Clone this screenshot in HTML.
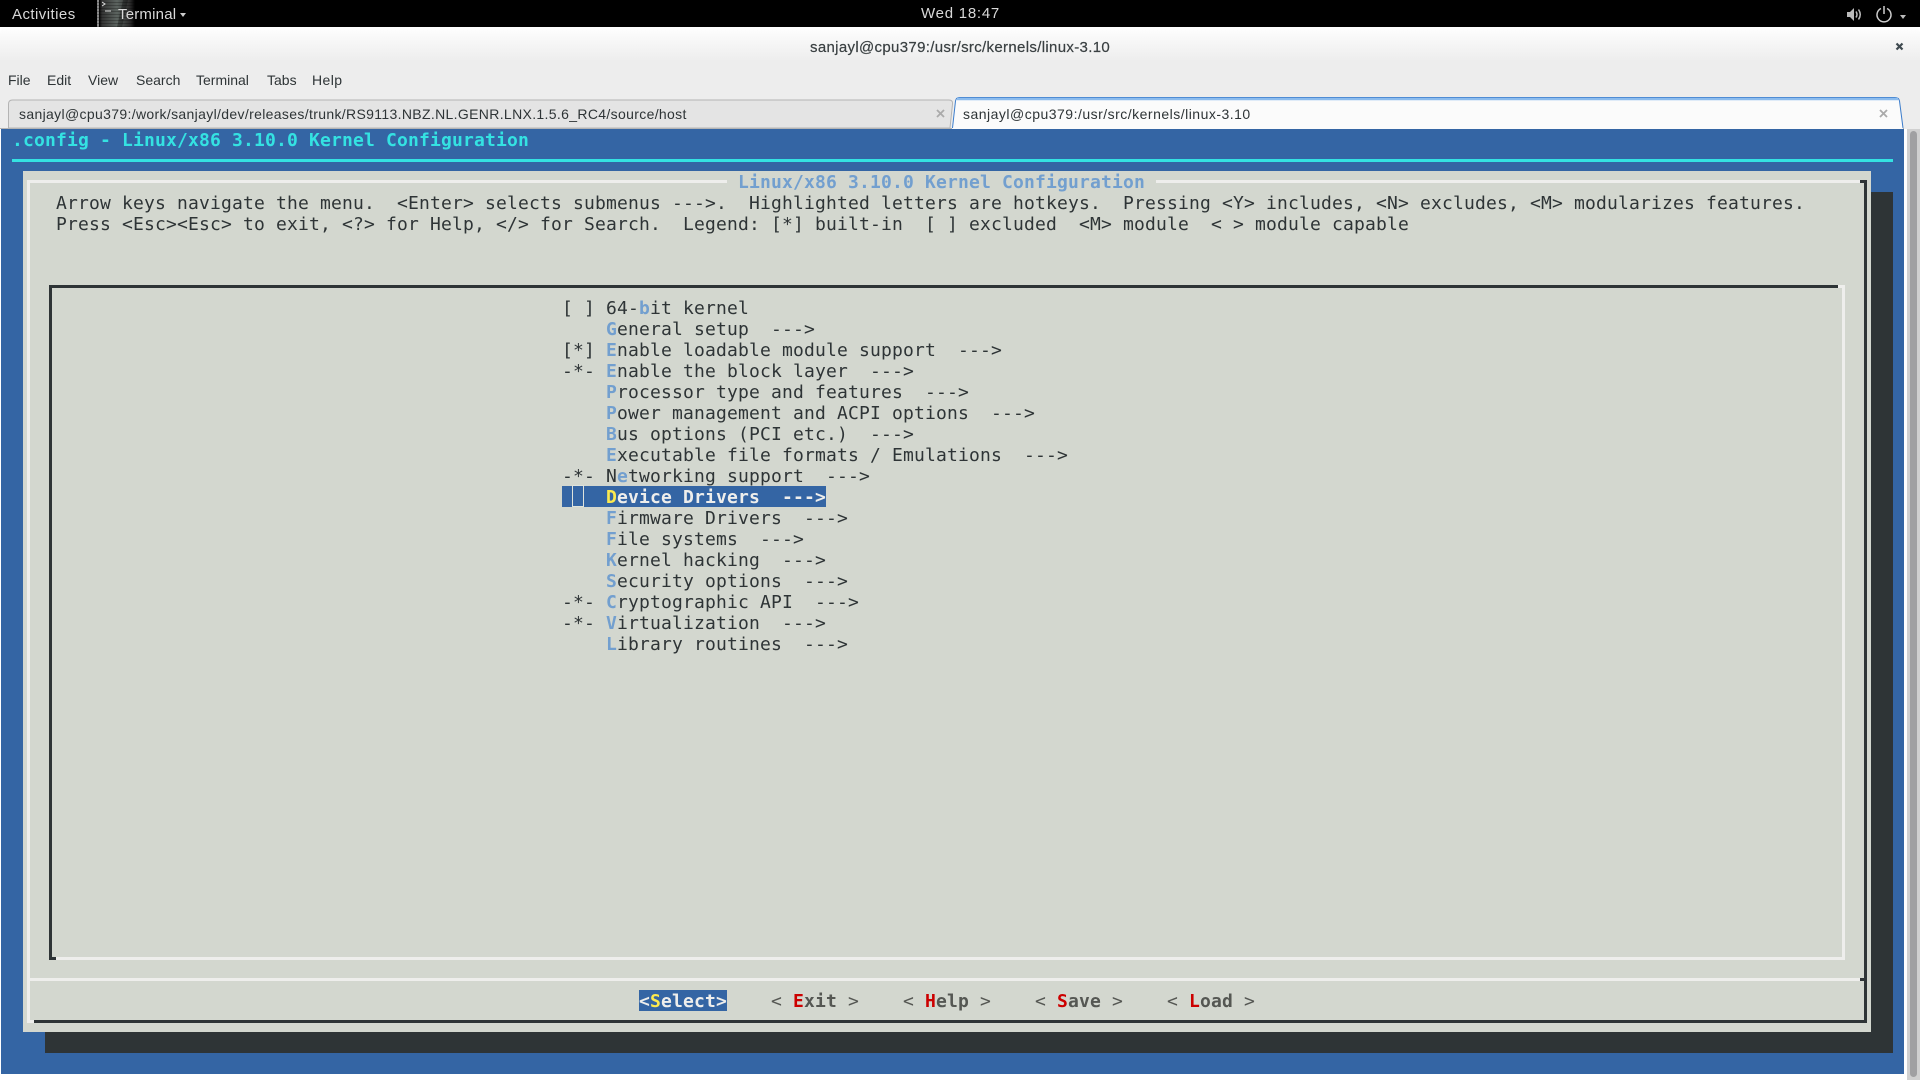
<!DOCTYPE html>
<html lang="en"><head><meta charset="utf-8"><title>Terminal</title>
<style>
html,body{margin:0;padding:0;background:#fff}
body{width:1920px;height:1080px;overflow:hidden;position:relative;font-family:"Liberation Sans",sans-serif}
.a{position:absolute}
.t{position:absolute;white-space:pre;font:18px/21px "DejaVu Sans Mono",monospace;letter-spacing:.163px;color:#2e3436;margin-top:1px}
.h{color:#729fcf;font-weight:bold}
.u{position:absolute;white-space:pre;font-size:14px;line-height:18px;color:#2e3436}
.b{color:#555753;font-weight:bold}
.b i{font-style:normal;font-weight:normal}
.b em{font-style:normal;color:#cc0000}
.l{background:#eeeeec}.d{background:#2e3436}
</style></head><body>
<!-- top bar -->
<div class="a" style="left:0;top:0;width:1920px;height:27px;background:#000"></div>
<div class="u" style="left:12px;top:6px;color:#d8d8d8;font-size:15px;letter-spacing:.45px">Activities</div>
<div class="a" style="left:97px;top:0;width:38px;height:27px;background:repeating-linear-gradient(0deg,rgba(0,0,0,.25) 0 1px,transparent 1px 3px),linear-gradient(90deg,#8a8a8a 0,#8a8a8a 2px,#000 2px,#333 5px,#5c6460 20px,#2a2a2a 33px,#000 38px)"></div>
<svg class="a" style="left:97px;top:0" width="38" height="27" fill="none"><path d="M5 2l3 2-3 2" stroke="#ddd"/><path d="M8 11h6" stroke="#ddd"/><path d="M20 27L26 0h5L25 27z" fill="#000" fill-opacity=".3"/></svg>
<div class="u" style="left:118px;top:6px;color:#d8d8d8;font-size:15px;letter-spacing:.2px">Terminal</div>
<div class="a" style="left:180px;top:13px;border:3.5px solid transparent;border-top:4px solid #ccc;border-bottom:0"></div>
<div class="u" style="left:921px;top:5px;color:#d8d8d8;font-size:15px;letter-spacing:.75px">Wed 18:47</div>
<svg class="a" style="left:1845px;top:5px" width="60" height="20" viewBox="0 0 60 20" fill="none">
<path d="M2 7h3l4-4v13l-4-4H2z" fill="#bbb"/><path d="M11 6.500q2 3 0 6M13.500 4.500q3.500 5 0 10" stroke="#bbb" stroke-width="1.500"/>
<path d="M36 3.500a7 7 0 1 0 6 0M39 1v8" stroke="#ccc" stroke-width="1.500"/>
</svg>
<div class="a" style="left:1900px;top:15px;border:3px solid transparent;border-top:4px solid #bbb;border-bottom:0"></div>
<!-- window header -->
<div class="a" style="left:0;top:27px;width:1920px;height:102px;border-radius:6px 6px 0 0;background:linear-gradient(#fff 0,#fafafa 8px,#ededed 34px,#ededed 102px)"></div>
<div class="u" style="left:810px;top:39px;font-size:15px;color:#3a4042;-webkit-text-stroke:.2px #3a4042;letter-spacing:.33px">sanjayl@cpu379:/usr/src/kernels/linux-3.10</div>
<svg class="a" style="left:1895px;top:42px" width="9" height="9"><path d="M1.500 1.500l6 6M7.500 1.500l-6 6" stroke="#3f4a50" stroke-width="2.200"/></svg>
<div class="u" style="left:8px;top:71px">File</div>
<div class="u" style="left:47px;top:71px">Edit</div>
<div class="u" style="left:88px;top:71px">View</div>
<div class="u" style="left:136px;top:71px">Search</div>
<div class="u" style="left:196px;top:71px">Terminal</div>
<div class="u" style="left:267px;top:71px">Tabs</div>
<div class="u" style="left:312px;top:71px;letter-spacing:.4px">Help</div>
<!-- tabs -->
<svg class="a" style="left:0;top:90px" width="1920" height="40">
<path d="M8.500 38V14q0-4 4-4H949q4 0 3.500 4L950 38z" fill="#e4e4e4" stroke="#b4b4b4"/>
<path d="M0 38.500H954M1900 38.500H1904" stroke="#b4b4b4"/>
<path d="M952 39L955 11q.5-4 4-4H1895q4 0 4.500 4L1903 39z" fill="#fbfbfb"/>
<path d="M952.500 38L955.500 11q.5-3.500 4-3.500H1895q4 0 4.500 3.500L1903 38" fill="none" stroke="#3b7ccb"/>
<path d="M957 9H1898" stroke="#8cbcee" stroke-width="2.500"/>
</svg>
<div class="u" style="left:19px;top:105px;letter-spacing:.34px">sanjayl@cpu379:/work/sanjayl/dev/releases/trunk/RS9113.NBZ.NL.GENR.LNX.1.5.6_RC4/source/host</div>
<div class="u" style="left:963px;top:105px;letter-spacing:.49px">sanjayl@cpu379:/usr/src/kernels/linux-3.10</div>
<svg class="a" style="left:936px;top:109px" width="9" height="9"><path d="M1 1l7 7M8 1L1 8" stroke="#aaa" stroke-width="1.800"/></svg>
<svg class="a" style="left:1879px;top:109px" width="9" height="9"><path d="M1 1l7 7M8 1L1 8" stroke="#aaa" stroke-width="1.800"/></svg>
<!-- terminal -->
<div class="a" style="left:1px;top:129px;width:1903px;height:945px;background:#3465a4"></div>
<div class="a" style="left:1907px;top:129px;width:13px;height:951px;background:#d0d0d0"></div>
<div class="a" style="left:1910px;top:131px;width:7px;height:946px;background:#a0a0a2;border-radius:4px"></div>
<div class="t" style="left:12px;top:129px;color:#34e2e2;font-weight:bold">.config - Linux/x86 3.10.0 Kernel Configuration</div>
<div class="a" style="left:12px;top:159px;width:1881px;height:3px;background:#34e2e2"></div>
<div class="a d" style="left:45px;top:192px;width:1848px;height:861px"></div>
<div class="a" style="left:23px;top:171px;width:1848px;height:861px;background:#d3d7cf"></div>
<!-- dialog frame -->
<div class="a l" style="left:27px;top:180px;width:3px;height:843px"></div>
<div class="a l" style="left:27px;top:180px;width:1833px;height:3px"></div>
<div class="a d" style="left:1860px;top:180px;width:7px;height:3px"></div>
<div class="a d" style="left:1864px;top:180px;width:3px;height:843px"></div>
<div class="a l" style="left:27px;top:1020px;width:7px;height:3px"></div>
<div class="a d" style="left:34px;top:1020px;width:1833px;height:3px"></div>
<div class="a l" style="left:30px;top:978px;width:1830px;height:3px"></div>
<div class="a d" style="left:1860px;top:978px;width:4px;height:3px"></div>
<div class="t" style="left:727px;top:171px;background:#d3d7cf;color:#729fcf;font-weight:bold"> Linux/x86 3.10.0 Kernel Configuration </div>
<div class="t" style="left:56px;top:192px">Arrow keys navigate the menu.  &lt;Enter&gt; selects submenus ---&gt;.  Highlighted letters are hotkeys.  Pressing &lt;Y&gt; includes, &lt;N&gt; excludes, &lt;M&gt; modularizes features.</div>
<div class="t" style="left:56px;top:213px">Press &lt;Esc&gt;&lt;Esc&gt; to exit, &lt;?&gt; for Help, &lt;/&gt; for Search.  Legend: [*] built-in  [ ] excluded  &lt;M&gt; module  &lt; &gt; module capable</div>
<!-- menu frame -->
<div class="a d" style="left:49px;top:285px;width:1789px;height:3px"></div>
<div class="a d" style="left:49px;top:285px;width:3px;height:675px"></div>
<div class="a d" style="left:49px;top:957px;width:7px;height:3px"></div>
<div class="a l" style="left:1838px;top:285px;width:7px;height:3px"></div>
<div class="a l" style="left:1842px;top:285px;width:3px;height:675px"></div>
<div class="a l" style="left:56px;top:957px;width:1789px;height:3px"></div>
<!-- menu -->
<div class="t" style="left:562px;top:297px">[ ] 64-<span class="h">b</span>it kernel</div>
<div class="t" style="left:562px;top:318px">    <span class="h">G</span>eneral setup  ---&gt;</div>
<div class="t" style="left:562px;top:339px">[*] <span class="h">E</span>nable loadable module support  ---&gt;</div>
<div class="t" style="left:562px;top:360px">-*- <span class="h">E</span>nable the block layer  ---&gt;</div>
<div class="t" style="left:562px;top:381px">    <span class="h">P</span>rocessor type and features  ---&gt;</div>
<div class="t" style="left:562px;top:402px">    <span class="h">P</span>ower management and ACPI options  ---&gt;</div>
<div class="t" style="left:562px;top:423px">    <span class="h">B</span>us options (PCI etc.)  ---&gt;</div>
<div class="t" style="left:562px;top:444px">    <span class="h">E</span>xecutable file formats / Emulations  ---&gt;</div>
<div class="t" style="left:562px;top:465px">-*- N<span class="h">e</span>tworking support  ---&gt;</div>
<div class="a" style="left:562px;top:486px;width:264px;height:21px;background:#3465a4"></div>
<div class="a" style="left:572px;top:485px;width:10px;height:20px;border:1px solid #dfe3dc"></div>
<div class="t" style="left:562px;top:486px;color:#eeeeec;font-weight:bold">    <span style="color:#fce94f">D</span>evice Drivers  ---&gt;</div>
<div class="t" style="left:562px;top:507px">    <span class="h">F</span>irmware Drivers  ---&gt;</div>
<div class="t" style="left:562px;top:528px">    <span class="h">F</span>ile systems  ---&gt;</div>
<div class="t" style="left:562px;top:549px">    <span class="h">K</span>ernel hacking  ---&gt;</div>
<div class="t" style="left:562px;top:570px">    <span class="h">S</span>ecurity options  ---&gt;</div>
<div class="t" style="left:562px;top:591px">-*- <span class="h">C</span>ryptographic API  ---&gt;</div>
<div class="t" style="left:562px;top:612px">-*- <span class="h">V</span>irtualization  ---&gt;</div>
<div class="t" style="left:562px;top:633px">    <span class="h">L</span>ibrary routines  ---&gt;</div>
<!-- buttons -->
<div class="a" style="left:639px;top:990px;width:88px;height:21px;background:#3465a4"></div>
<div class="t" style="left:639px;top:990px;color:#eeeeec;font-weight:bold">&lt;<span style="color:#fce94f">S</span>elect&gt;</div>
<div class="t b" style="left:771px;top:990px"><i>&lt;</i> <em>E</em>xit <i>&gt;</i></div>
<div class="t b" style="left:903px;top:990px"><i>&lt;</i> <em>H</em>elp <i>&gt;</i></div>
<div class="t b" style="left:1035px;top:990px"><i>&lt;</i> <em>S</em>ave <i>&gt;</i></div>
<div class="t b" style="left:1167px;top:990px"><i>&lt;</i> <em>L</em>oad <i>&gt;</i></div>
</body></html>
